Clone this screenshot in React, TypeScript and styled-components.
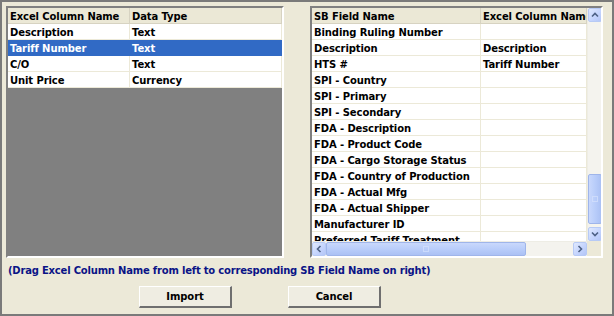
import React from "react";
import styled, { createGlobalStyle } from "styled-components";

const GlobalStyle = createGlobalStyle`
  * { box-sizing: border-box; }
  body {
    margin: 0;
    font-family: "DejaVu Sans", Verdana, sans-serif;
  }
`;

const Window = styled.div`
  width: 614px;
  height: 316px;
  background: #ece9d8;
  border: 2px solid #7a7a7a;
  padding: 4px 9px 0 4px;
  display: flex;
  flex-direction: column;
  font-size: 10px;
  font-weight: bold;
  letter-spacing: -0.1px;
  color: #000;
`;

const Panels = styled.div`
  display: flex;
  justify-content: space-between;
  height: 252px;
`;

const Sunken = styled.div<{ $width: number }>`
  width: ${(p) => p.$width}px;
  height: 100%;
  border-style: solid;
  border-width: 2px;
  border-color: #808080 #ffffff #ffffff #808080;
  box-shadow: inset 1px 1px 0 #404040;
  overflow: hidden;
`;

const LeftBody = styled.div`
  background: #808080;
  height: 100%;
  display: flex;
  flex-direction: column;
`;

const Table = styled.div<{ $cols: string }>`
  display: grid;
  grid-template-columns: ${(p) => p.$cols};
  background: #fff;
`;

const HeadCell = styled.div`
  height: 16px;
  line-height: 17px;
  padding-left: 2px;
  background: #ebe8d6;
  border-right: 1px solid #d7d3c2;
  border-bottom: 1px solid #d7d3c2;
  white-space: nowrap;
  overflow: hidden;
`;

const Cell = styled.div<{ $selected?: boolean }>`
  height: 16px;
  line-height: 17px;
  padding-left: 2px;
  white-space: nowrap;
  overflow: hidden;
  background: ${(p) => (p.$selected ? "#316ac5" : "#fff")};
  color: ${(p) => (p.$selected ? "#fff" : "#000")};
  border-right: 1px solid ${(p) => (p.$selected ? "#316ac5" : "#ece9d8")};
  border-bottom: 1px solid ${(p) => (p.$selected ? "#316ac5" : "#ece9d8")};
`;

const RightBody = styled.div`
  display: grid;
  grid-template-columns: 1fr 14px;
  grid-template-rows: 1fr 15px;
  height: 100%;
  background: #fff;
`;

const Viewport = styled.div`
  overflow: hidden;
`;

const VScroll = styled.div`
  display: flex;
  flex-direction: column;
  background: #f4f3ee;
  border-left: 1px solid #eeede5;
`;

const HScroll = styled.div`
  display: flex;
  background: #f4f3ee;
  border-top: 1px solid #eeede5;
`;

const Corner = styled.div`
  background: #ece9d8;
`;

const Arrow = styled.div`
  width: 14px;
  height: 14px;
  flex: none;
  background: linear-gradient(135deg, #e0e9fe 0%, #c3d3fd 60%, #b4c6f6 100%);
  border: 1px solid #b7caf5;
  border-radius: 2px;
  display: flex;
  align-items: center;
  justify-content: center;
`;

const Track = styled.div<{ $size?: number }>`
  flex: ${(p) => (p.$size ? `0 0 ${p.$size}px` : "1")};
`;

const Thumb = styled.div<{ $vertical?: boolean }>`
  flex: none;
  ${(p) => (p.$vertical ? "height: 50px; width: 14px;" : "width: 200px; height: 14px;")}
  background: ${(p) =>
    p.$vertical
      ? "linear-gradient(90deg, #c9d8fc 0%, #b9cdfa 50%, #abc1f4 100%)"
      : "linear-gradient(180deg, #c9d8fc 0%, #b9cdfa 50%, #abc1f4 100%)"};
  border: 1px solid #9fb5ea;
  border-radius: 2px;
  display: flex;
  align-items: center;
  justify-content: center;
`;

const Grip = styled.div`
  width: 6px;
  height: 6px;
  border: 1px solid #d6e1fc;
  opacity: 0.7;
`;

const Hint = styled.div`
  color: #0a1486;
  height: 24px;
  line-height: 25px;
  padding-left: 2px;
  letter-spacing: -0.2px;
  white-space: nowrap;
`;

const Buttons = styled.div`
  display: flex;
  gap: 56px;
  padding-left: 133px;
  margin-top: 4px;
`;

const Button = styled.div`
  width: 93px;
  height: 22px;
  line-height: 19px;
  text-align: center;
  background: #efede2;
  border-style: solid;
  border-width: 1px 2px 2px 1px;
  border-color: #ffffff #6f6f6f #6f6f6f #ffffff;
`;

const Chevron: React.FC<{ dir: "up" | "down" | "left" | "right" }> = ({ dir }) => {
  const rot = { up: 0, right: 90, down: 180, left: 270 }[dir];
  return (
    <svg width="8" height="8" viewBox="0 0 8 8" style={{ transform: `rotate(${rot}deg)` }}>
      <path d="M1 5.5 L4 2.5 L7 5.5" fill="none" stroke="#4d6185" strokeWidth="1.6" />
    </svg>
  );
};

const leftRows = [
  ["Description", "Text"],
  ["Tariff Number", "Text"],
  ["C/O", "Text"],
  ["Unit Price", "Currency"],
];

const rightRows = [
  ["Binding Ruling Number", ""],
  ["Description", "Description"],
  ["HTS #", "Tariff Number"],
  ["SPI - Country", ""],
  ["SPI - Primary", ""],
  ["SPI - Secondary", ""],
  ["FDA - Description", ""],
  ["FDA - Product Code", ""],
  ["FDA - Cargo Storage Status", ""],
  ["FDA - Country of Production", ""],
  ["FDA - Actual Mfg", ""],
  ["FDA - Actual Shipper", ""],
  ["Manufacturer ID", ""],
  ["Preferred Tariff Treatment", ""],
];

export default function App() {
  return (
    <>
      <GlobalStyle />
      <Window>
        <Panels>
          <Sunken $width={278}>
            <LeftBody>
              <Table $cols="122px 1fr">
                <HeadCell>Excel Column Name</HeadCell>
                <HeadCell>Data Type</HeadCell>
                {leftRows.map(([a, b], i) => (
                  <React.Fragment key={a}>
                    <Cell $selected={i === 1}>{a}</Cell>
                    <Cell $selected={i === 1}>{b}</Cell>
                  </React.Fragment>
                ))}
              </Table>
            </LeftBody>
          </Sunken>
          <Sunken $width={293}>
            <RightBody>
              <Viewport>
                <Table $cols="169px 1fr">
                  <HeadCell>SB Field Name</HeadCell>
                  <HeadCell>Excel Column Name</HeadCell>
                  {rightRows.map(([a, b]) => (
                    <React.Fragment key={a}>
                      <Cell>{a}</Cell>
                      <Cell>{b}</Cell>
                    </React.Fragment>
                  ))}
                </Table>
              </Viewport>
              <VScroll>
                <Arrow>
                  <Chevron dir="up" />
                </Arrow>
                <Track $size={152} />
                <Thumb $vertical>
                  <Grip />
                </Thumb>
                <Track />
                <Arrow>
                  <Chevron dir="down" />
                </Arrow>
              </VScroll>
              <HScroll>
                <Arrow>
                  <Chevron dir="left" />
                </Arrow>
                <Thumb>
                  <Grip />
                </Thumb>
                <Track />
                <Arrow>
                  <Chevron dir="right" />
                </Arrow>
              </HScroll>
              <Corner />
            </RightBody>
          </Sunken>
        </Panels>
        <Hint>(Drag Excel Column Name from left to corresponding SB Field Name on right)</Hint>
        <Buttons>
          <Button>Import</Button>
          <Button>Cancel</Button>
        </Buttons>
      </Window>
    </>
  );
}
